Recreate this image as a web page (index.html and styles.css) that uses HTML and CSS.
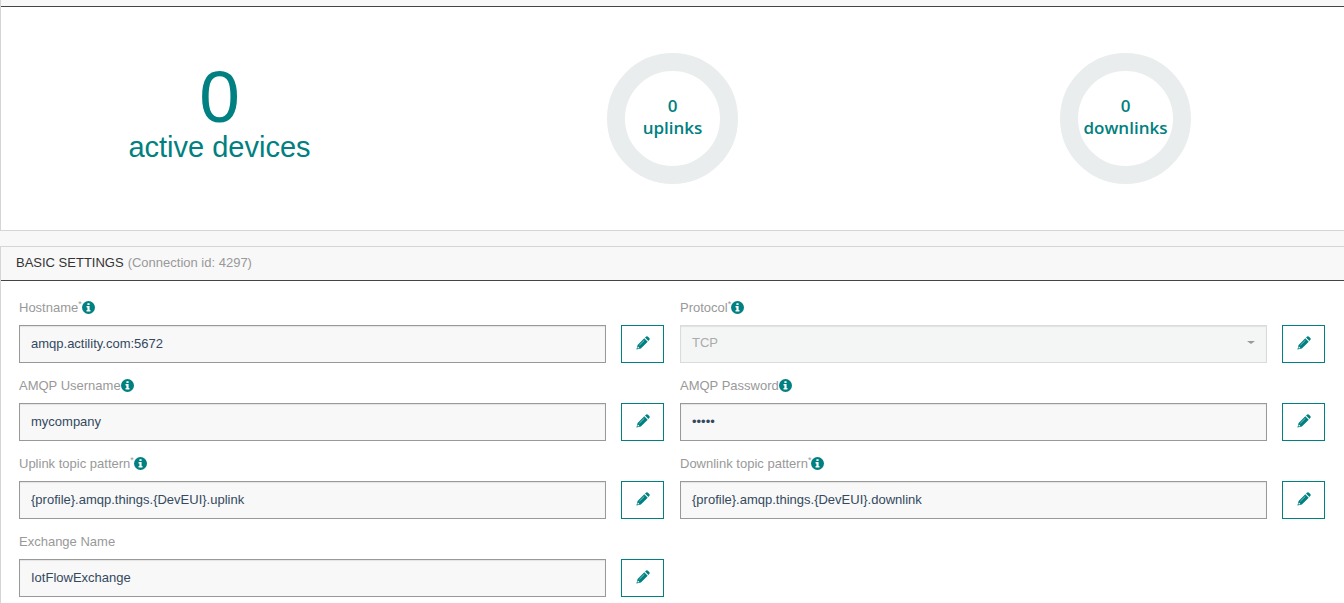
FILE: index.html
```html
<!DOCTYPE html>
<html lang="en">
<head>
<meta charset="utf-8">
<title>Connection</title>
<link rel="stylesheet" href="styles.css">
</head>
<body>
<svg class="sprite" aria-hidden="true">
  <symbol id="pencil" viewBox="0 0 14 14">
    <path fill="currentColor" d="M8.3 2.3 11.7 5.7 4.9 12.4 .4 13.6 1.6 9.1Z"/>
    <path fill="currentColor" d="M9 1.6 10.2.6Q11.1-.1 12 .7L13.3 2Q14.1 2.9 13.4 3.8L12.4 5Z"/>
    <path fill="#fff" d="M1.9 10.6 3.4 12.1 1.9 12.6 1.4 12.1Z"/>
    <path stroke="#9fd0d0" stroke-width=".8" d="M3.4 9.2 8.3 4.3"/>
  </symbol>
  <symbol id="info" viewBox="0 0 12 12">
    <circle cx="6" cy="6" r="6" fill="currentColor"/>
    <path fill="#fff" d="M5 2h2v1.7H5ZM4.2 4.7H7v3.7h.8v1.3H4.2V8.4H5V6h-.8Z"/>
  </symbol>
</svg>

<section class="panel">
  <div class="panel-edge"></div>
  <div class="stats">
    <div class="devices">
      <span class="devices-count">0</span>
      <span class="devices-label">active devices</span>
    </div>
    <div class="ring"><span>0</span><span>uplinks</span></div>
    <div class="ring"><span>0</span><span>downlinks</span></div>
  </div>
</section>

<section class="panel">
  <header class="panel-header">
    <h2 class="panel-title">BASIC SETTINGS</h2>
    <span class="panel-note">(Connection id: 4297)</span>
  </header>
  <form class="fields">
    <div class="field">
      <label class="label" for="hostname">Hostname<sup>*</sup><svg class="info"><use href="#info"/></svg></label>
      <input class="control" id="hostname" type="text" value="amqp.actility.com:5672" readonly>
      <button class="edit" type="button" aria-label="Edit hostname"><svg class="pencil"><use href="#pencil"/></svg></button>
    </div>
    <div class="field">
      <label class="label" for="protocol">Protocol<sup>*</sup><svg class="info"><use href="#info"/></svg></label>
      <div class="select-wrap">
        <select class="control control-disabled" id="protocol" disabled><option>TCP</option></select>
      </div>
      <button class="edit" type="button" aria-label="Edit protocol"><svg class="pencil"><use href="#pencil"/></svg></button>
    </div>
    <div class="field">
      <label class="label" for="username">AMQP Username<svg class="info"><use href="#info"/></svg></label>
      <input class="control" id="username" type="text" value="mycompany" readonly>
      <button class="edit" type="button" aria-label="Edit username"><svg class="pencil"><use href="#pencil"/></svg></button>
    </div>
    <div class="field">
      <label class="label" for="password">AMQP Password<svg class="info"><use href="#info"/></svg></label>
      <input class="control" id="password" type="password" value="guest" readonly>
      <button class="edit" type="button" aria-label="Edit password"><svg class="pencil"><use href="#pencil"/></svg></button>
    </div>
    <div class="field">
      <label class="label" for="uplink">Uplink topic pattern<sup>*</sup><svg class="info"><use href="#info"/></svg></label>
      <input class="control" id="uplink" type="text" value="{profile}.amqp.things.{DevEUI}.uplink" readonly>
      <button class="edit" type="button" aria-label="Edit uplink topic pattern"><svg class="pencil"><use href="#pencil"/></svg></button>
    </div>
    <div class="field">
      <label class="label" for="downlink">Downlink topic pattern<sup>*</sup><svg class="info"><use href="#info"/></svg></label>
      <input class="control" id="downlink" type="text" value="{profile}.amqp.things.{DevEUI}.downlink" readonly>
      <button class="edit" type="button" aria-label="Edit downlink topic pattern"><svg class="pencil"><use href="#pencil"/></svg></button>
    </div>
    <div class="field">
      <label class="label" for="exchange">Exchange Name</label>
      <input class="control" id="exchange" type="text" value="IotFlowExchange" readonly>
      <button class="edit" type="button" aria-label="Edit exchange name"><svg class="pencil"><use href="#pencil"/></svg></button>
    </div>
  </form>
</section>
</body>
</html>
```

FILE: styles.css
```css
* {
  box-sizing: border-box;
}

body {
  margin: 0;
  background: #f8f8f8;
  color: #333;
  font: 13px/18px "Liberation Sans", Arial, sans-serif;
}

.sprite {
  display: none;
}

.panel {
  border-left: 1px solid #d5d5d5;
  background: #fff;
}

.panel + .panel {
  margin-top: 15px;
  border-top: 1px solid #d5d5d5;
}

.panel:first-of-type {
  border-bottom: 1px solid #d5d5d5;
}

.panel-edge {
  height: 7px;
  border-bottom: 1px solid #444;
  background: #f8f8f8;
}

.stats {
  display: grid;
  grid-template-columns: repeat(3, 1fr);
  column-gap: 16px;
  justify-items: center;
  align-items: start;
  padding: 46px 0;
}

.devices {
  display: flex;
  flex-direction: column;
  align-items: center;
  color: #008080;
}

.devices-count {
  font-size: 73px;
  line-height: 88px;
}

.devices-label {
  font-size: 29px;
  line-height: 12px;
}

.ring {
  display: flex;
  flex-direction: column;
  align-items: center;
  justify-content: center;
  width: 131px;
  height: 131px;
  padding-bottom: 3px;
  border: 18px solid #e9eded;
  border-radius: 50%;
  color: #008080;
  font: 600 17px/22px "Open Sans", "Noto Sans", sans-serif;
}

.panel-header {
  display: flex;
  align-items: center;
  gap: 4px;
  height: 34px;
  padding: 0 15px 2px;
  border-bottom: 1px solid #444;
  background: #f8f8f8;
}

.panel-title {
  margin: 0;
  font-size: 13px;
  font-weight: 400;
}

.panel-note {
  color: #999;
}

.fields {
  display: grid;
  grid-template-columns: 1fr 1fr;
  gap: 14px 16px;
  padding: 18px 19px 17px 18px;
}

.field {
  display: grid;
  grid-template-columns: 1fr 43px;
  gap: 8px 15px;
}

.label {
  display: flex;
  grid-column: 1 / -1;
  align-items: center;
  height: 18px;
  padding-bottom: 1px;
  color: #999;
}

.label sup {
  align-self: flex-start;
  font-size: 9px;
  line-height: 10px;
}

.info {
  width: 13px;
  height: 13px;
  color: #008080;
}

.control {
  width: 100%;
  height: 38px;
  margin: 0;
  padding: 0 11px 2px;
  border: 1px solid #999;
  border-radius: 0;
  background: #f8f8f8;
  box-shadow: inset 0 1px 1px rgba(0, 0, 0, 0.08);
  color: #34495e;
  font: inherit;
}

.control-disabled {
  appearance: none;
  border-color: #d8dcdc;
  background: #f4f6f6;
  color: #aaa;
  opacity: 1;
}

.select-wrap {
  position: relative;
}

.select-wrap::after {
  position: absolute;
  top: 16px;
  right: 12px;
  border: 4px solid transparent;
  border-top: 3px solid #999;
  border-bottom-width: 0;
  content: "";
}

.edit {
  display: flex;
  align-items: center;
  justify-content: center;
  height: 38px;
  padding: 0 0 2px;
  border: 1px solid #008080;
  background: #fff;
  color: #008080;
}

.pencil {
  width: 14px;
  height: 14px;
}
```
